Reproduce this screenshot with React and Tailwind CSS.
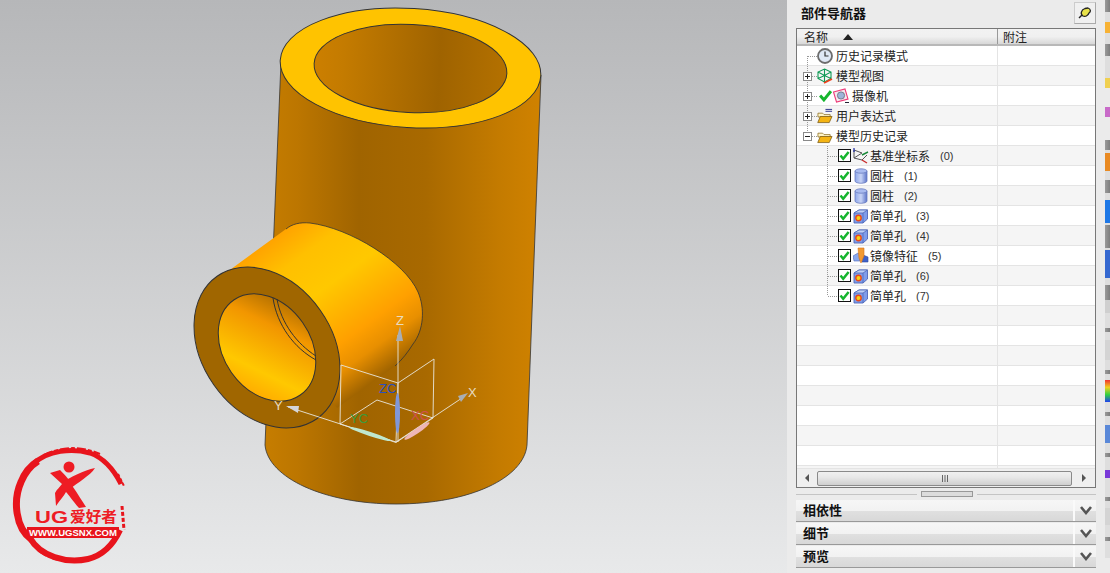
import React from "react";

const cjk = { fontFamily: '"Noto Sans CJK SC", "Liberation Sans", sans-serif' };

function Scene() {
  return (
    <svg width="787" height="573" viewBox="0 0 787 573" className="block">
      <defs>
        <linearGradient id="body" gradientUnits="userSpaceOnUse" x1="265" y1="0" x2="541" y2="0">
          <stop offset="0" stopColor="#c67d00" />
          <stop offset="0.12" stopColor="#bc7600" />
          <stop offset="0.34" stopColor="#a06400" />
          <stop offset="0.58" stopColor="#a86900" />
          <stop offset="0.85" stopColor="#c47b00" />
          <stop offset="1" stopColor="#d08200" />
        </linearGradient>
        <linearGradient id="well" gradientUnits="userSpaceOnUse" x1="314" y1="0" x2="507" y2="0">
          <stop offset="0" stopColor="#cc7f00" />
          <stop offset="0.15" stopColor="#c47b00" />
          <stop offset="0.65" stopColor="#9f6300" />
          <stop offset="1" stopColor="#b47100" />
        </linearGradient>
        <linearGradient id="pipe" gradientUnits="userSpaceOnUse" x1="238" y1="258" x2="344" y2="403">
          <stop offset="0" stopColor="#ff9f00" />
          <stop offset="0.2" stopColor="#ffc000" />
          <stop offset="0.42" stopColor="#ffc800" />
          <stop offset="0.72" stopColor="#ffa000" />
          <stop offset="0.85" stopColor="#e88f00" />
          <stop offset="0.95" stopColor="#b87200" />
          <stop offset="1" stopColor="#a06400" />
        </linearGradient>
        <linearGradient id="bore" gradientUnits="userSpaceOnUse" x1="235" y1="290" x2="295" y2="400">
          <stop offset="0" stopColor="#8f5a00" />
          <stop offset="0.35" stopColor="#f29600" />
          <stop offset="0.72" stopColor="#ffc800" />
          <stop offset="1" stopColor="#ff9f00" />
        </linearGradient>
      </defs>
      {/* main cylinder */}
      <path d="M281 62 L265 445 C268 478 325 504 396 504 C470 504 524 478 527 445 L541 75 Z" fill="url(#body)" stroke="#333" strokeWidth="0.8" />
      <ellipse cx="410.5" cy="68" rx="130.5" ry="59.5" transform="rotate(3.5 410.5 68)" fill="#ffc300" stroke="#333" strokeWidth="1" />
      <ellipse cx="410.5" cy="68.5" rx="96.5" ry="44" transform="rotate(3 410.5 68.5)" fill="url(#well)" stroke="#333" strokeWidth="1" />
      {/* side pipe */}
      <path d="M227 272 L286 229 C292 224 300 222 310 223 C350 228 405 262 418 292 C425 308 424 330 413 344 C408 352 402 360 395 366 L337 408 Z" fill="url(#pipe)" />
      <path d="M286 229 C292 224 300 222 310 223 C350 228 405 262 418 292 C425 308 424 330 413 344 C408 352 402 360 395 366" fill="none" stroke="#333" strokeWidth="0.8" />
      <ellipse cx="267" cy="347.5" rx="87" ry="65" transform="rotate(55 267 347.5)" fill="#a06600" stroke="#333" strokeWidth="1" />
      <ellipse cx="267" cy="347.5" rx="58" ry="43.5" transform="rotate(55 267 347.5)" fill="url(#bore)" stroke="#333" strokeWidth="1" />
      <path d="M273 298 C277 325 294 348 316 360" fill="none" stroke="#333" strokeWidth="1" />
      <path d="M277 299 C281 323 297 344 316 356" fill="none" stroke="#333" strokeWidth="1" />
      {/* datum */}
      <g stroke="#e9e6de" strokeWidth="0.9" fill="none">
        <path d="M340 424 L396 442.5 L433 418 L377 400 Z" />
        <path d="M341 365 L398 383 L434 359 M340 424 L341 365 M433 418 L434 359 M398 383 L396 442" />
        <path d="M398 442 L398 335" />
        <path d="M396 442 L288 407" />
        <path d="M396 442 L465 396" />
      </g>
      <polygon points="400,326 396,341 403,341" fill="#a9aeb4" />
      <polygon points="286,406 299,406 298,413" fill="#d4d6da" />
      <polygon points="468,393 458,396 461,402" fill="#a9aeb4" />
      <ellipse cx="397.5" cy="413" rx="2.5" ry="20" fill="#7f97d8" />
      <ellipse cx="370" cy="434" rx="22" ry="2" transform="rotate(18 370 434)" fill="#bfe8cf" />
      <ellipse cx="417" cy="431" rx="15" ry="2.5" transform="rotate(-34 417 431)" fill="#eeb6b6" />
      <g fontFamily="Liberation Sans, sans-serif" fontSize="13">
        <text x="396" y="325" fill="#e8dcc0">Z</text>
        <text x="274" y="410" fill="#e8dcc0">Y</text>
        <text x="468" y="397" fill="#e8dcc0">X</text>
        <text x="379" y="393" fill="#2a4fc0">ZC</text>
        <text x="350" y="423" fill="#3c9a3c">YC</text>
        <text x="411" y="420" fill="#d05050">XC</text>
      </g>
    </svg>
  );
}

function Logo() {
  return (
    <svg width="135" height="130" viewBox="0 0 135 130" className="absolute left-0 top-[440px]">
      <g fill="none" stroke="#e8141c">
        <path d="M32 100 C15 88 13 60 21 42 C25 32 30 26 38 21" strokeWidth="7" />
        <path d="M33 24 C48 10 72 8 90 13 C104 18 114 30 121 44" strokeWidth="5" />
        <path d="M44 15 C62 6 82 6 100 14" strokeWidth="2" strokeDasharray="9 2 4 2" />
        <path d="M30 98 C40 116 66 124 88 119 C104 115 114 103 120 90" strokeWidth="6" />
        <path d="M40 112 C58 124 84 125 102 114" strokeWidth="2" strokeDasharray="7 2 3 2" />
        <path d="M122 66 L124 90" strokeWidth="3" strokeDasharray="4 2" />
        <path d="M118 34 L124 46" strokeWidth="2" strokeDasharray="3 2" />
      </g>
      <circle cx="69" cy="27" r="5.5" fill="#ee1c24" />
      <path d="M50 33 L60 30 C66 36 70 40 73 47 C78 54 82 61 86 67 L79 68 C72 60 69 55 66 52 C64 56 60 60 56 66 L55 53 C57 49 60 47 62 44 C58 40 54 37 50 33 Z" fill="#ee1c24" />
      <path d="M62 42 C70 38 84 30 95 28 C90 36 78 42 69 50 Z" fill="#ee1c24" />
      <text x="35" y="83" fontFamily="Liberation Sans, sans-serif" fontSize="17" fontWeight="700" fill="#ee1c24" textLength="33" lengthAdjust="spacingAndGlyphs">UG</text>
      <text x="70" y="82" fontFamily='"Noto Sans CJK SC", sans-serif' fontSize="15" fontWeight="700" fill="#ee1c24" textLength="47" lengthAdjust="spacingAndGlyphs">爱好者</text>
      <rect x="27" y="87" width="92" height="11" fill="#e8141c" />
      <text x="29" y="96" fontFamily="Liberation Sans, sans-serif" fontSize="9.5" fontWeight="700" fill="#ffffff" textLength="88" lengthAdjust="spacingAndGlyphs">WWW.UGSNX.COM</text>
    </svg>
  );
}

function Gutter0({ box, first, last }) {
  return (
    <svg width="20" height="19" viewBox="0 0 20 19" className="shrink-0">
      <g stroke="#999" strokeDasharray="1 1" fill="none" shapeRendering="crispEdges">
        <path d={`M10.5 ${first ? 10 : 0} V${last ? 10 : 20}`} />
        <path d="M10.5 10.5 H20" />
      </g>
      {box && (
        <g shapeRendering="crispEdges">
          <rect x="6.5" y="6.5" width="8" height="8" fill="#fff" stroke="#8a8a8a" />
          <path d="M8 10.5 H13" stroke="#222" />
          {box === "+" && <path d="M10.5 8 V13" stroke="#222" />}
        </g>
      )}
    </svg>
  );
}

function Gutter1({ last }) {
  return (
    <svg width="41" height="19" viewBox="0 0 41 19" className="shrink-0">
      <g stroke="#999" strokeDasharray="1 1" fill="none" shapeRendering="crispEdges">
        <path d={`M30.5 0 V${last ? 10 : 20}`} />
        <path d="M30.5 10.5 H40" />
      </g>
    </svg>
  );
}

const Clock = () => (
  <svg width="16" height="16" viewBox="0 0 16 16" className="shrink-0">
    <circle cx="8" cy="8" r="7" fill="#dfe8f5" stroke="#6d6d6d" strokeWidth="1.8" />
    <path d="M8 3.5 V8 H11.5" fill="none" stroke="#333" strokeWidth="1.2" />
  </svg>
);
const GreenCube = () => (
  <svg width="16" height="16" viewBox="0 0 16 16" className="shrink-0">
    <path d="M7.5 1 L14 4 V10.5 L7.5 14 L1 10.5 V4 Z M1 4 L7.5 7.5 L14 4 M7.5 7.5 V14 M1 10.5 L7.5 7.5 L14 10.5 M7.5 1 V7.5" fill="none" stroke="#0f9a55" strokeWidth="1.1" />
    <path d="M7 15 L15 11" stroke="#f0401c" strokeWidth="1.8" />
  </svg>
);
const Tick = () => (
  <svg width="13" height="13" viewBox="0 0 12 12" className="shrink-0">
    <path d="M1 6 L4.5 10 L11 2" fill="none" stroke="#16b52e" strokeWidth="2.8" />
  </svg>
);
const Camera = () => (
  <svg width="16" height="16" viewBox="0 0 16 16" className="shrink-0">
    <path d="M0.5 4 L12 1 L15 11 L3.5 14 Z" fill="#f6e9ee" stroke="#ee3a78" strokeWidth="1.1" />
    <circle cx="8" cy="7.5" r="3.6" fill="#9db4d8" stroke="#667" strokeWidth="0.8" />
    <path d="M12 14.5 H16" stroke="#223" strokeWidth="1" />
  </svg>
);
const Folder = ({ bars }) => (
  <svg width="16" height="16" viewBox="0 0 17 16" className="shrink-0">
    {bars && <path d="M9 1 H16 M9 3 H16" stroke="#222a88" strokeWidth="1" />}
    <path d="M1 5 H6 L7.5 6.5 H14 V9 H1 Z" fill="#fff5c8" stroke="#8a6a1c" strokeWidth="0.8" />
    <path d="M3.5 8.5 H16 L13 15 H0.8 Z" fill="#f4b414" stroke="#7a5a14" strokeWidth="0.8" />
  </svg>
);
const Check = () => (
  <svg width="13" height="13" viewBox="0 0 13 13" className="shrink-0">
    <rect x="0.5" y="0.5" width="12" height="12" fill="#fff" stroke="#111" />
    <path d="M2.5 6.5 L5.2 9.8 L10.6 3" fill="none" stroke="#16b52e" strokeWidth="2.5" />
  </svg>
);
const Datum = () => (
  <svg width="16" height="16" viewBox="0 0 16 16" className="shrink-0">
    <path d="M1 2 V10 L9 12 L14 7 M1 10 L9 5 M1 2 L9 5" fill="none" stroke="#555" strokeWidth="1" />
    <path d="M1 4 V0" stroke="#1a2aa8" strokeWidth="1.2" />
    <path d="M9 7 L15 4" stroke="#1a8a3a" strokeWidth="1.4" />
    <path d="M9 12 L14 15" stroke="#c82a2a" strokeWidth="1.4" />
  </svg>
);
const Cyl = () => (
  <svg width="14" height="16" viewBox="0 0 14 16" className="shrink-0">
    <defs>
      <linearGradient id="cy" x1="0" x2="1" y1="0" y2="0">
        <stop offset="0" stopColor="#8da6ea" />
        <stop offset="0.5" stopColor="#c8d4f6" />
        <stop offset="1" stopColor="#5b74c8" />
      </linearGradient>
    </defs>
    <path d="M1 3 V13 C1 16 13 16 13 13 V3 Z" fill="url(#cy)" stroke="#6a7cc0" strokeWidth="0.8" />
    <ellipse cx="7" cy="3" rx="6" ry="2.2" fill="#a9bbf0" stroke="#6a7cc0" strokeWidth="0.8" />
  </svg>
);
const Hole = () => (
  <svg width="16" height="16" viewBox="0 0 16 16" className="shrink-0">
    <path d="M1 5 L6 2 H14.5 V11 L10 15 H1 Z" fill="#7f9cea" stroke="#4f68b8" strokeWidth="0.9" />
    <path d="M1 5 H10 L14.5 2 H6 Z" fill="#c0d0f6" stroke="#4f68b8" strokeWidth="0.8" />
    <path d="M10 5 V15" stroke="#4f68b8" strokeWidth="0.8" />
    <circle cx="5.5" cy="10" r="2.7" fill="#f6d414" stroke="#e8461c" strokeWidth="1.4" />
  </svg>
);
const Mirror = () => (
  <svg width="16" height="17" viewBox="0 0 16 17" className="shrink-0">
    <path d="M0 9 L5 6 L7 8 V14 L1 14 Z" fill="#8aa8ee" stroke="#4f68b8" strokeWidth="0.6" />
    <path d="M10 8 L15 10 V15 L9 15 Z" fill="#3f62c8" stroke="#2f4aa0" strokeWidth="0.6" />
    <path d="M5 1 H11 V9 L8 16 L6 11 Z" fill="#f29a32" stroke="#d87418" strokeWidth="0.6" />
  </svg>
);

const rows = [
  { depth: 0, first: true, icon: <Clock />, text: "历史记录模式" },
  { depth: 0, box: "+", icon: <GreenCube />, text: "模型视图" },
  { depth: 0, box: "+", icon: <span className="ml-[2px] flex items-center gap-[1px]"><Tick /><Camera /></span>, text: "摄像机" },
  { depth: 0, box: "+", icon: <Folder bars />, text: "用户表达式" },
  { depth: 0, box: "-", last: true, icon: <Folder />, text: "模型历史记录" },
  { depth: 1, icon: <Datum />, text: "基准坐标系", n: 0 },
  { depth: 1, icon: <Cyl />, text: "圆柱", n: 1 },
  { depth: 1, icon: <Cyl />, text: "圆柱", n: 2 },
  { depth: 1, icon: <Hole />, text: "简单孔", n: 3 },
  { depth: 1, icon: <Hole />, text: "简单孔", n: 4 },
  { depth: 1, icon: <Mirror />, text: "镜像特征", n: 5 },
  { depth: 1, icon: <Hole />, text: "简单孔", n: 6 },
  { depth: 1, last: true, icon: <Hole />, text: "简单孔", n: 7 },
];

function Row({ row, index }) {
  const bg = index % 2 ? "bg-[#f5f5f5]" : "bg-white";
  return (
    <div className={`flex h-5 shrink-0 border-b border-[#e4e4e4] ${bg}`}>
      <div className="flex w-[201px] shrink-0 items-center border-r border-[#e4e4e4]">
        {row && row.depth === 0 && (
          <>
            <Gutter0 box={row.box} first={row.first} last={row.last} />
            <span className="mr-[3px] flex">{row.icon}</span>
          </>
        )}
        {row && row.depth === 1 && (
          <>
            <Gutter1 last={row.last} />
            <span className="mr-[1px] flex"><Check /></span>
            <span className="flex w-[18px] justify-center">{row.icon}</span>
          </>
        )}
        {row && <span className="whitespace-nowrap text-[12px] leading-none text-[#222]">{row.text}</span>}
        {row && row.n !== undefined && (
          <span className="ml-[10px] whitespace-nowrap pt-[1px] text-[11px] leading-none text-[#333]" style={{ fontFamily: '"Liberation Sans", sans-serif' }}>
            ({row.n})
          </span>
        )}
      </div>
      <div className="flex-1" />
    </div>
  );
}

function Accordion({ label }) {
  return (
    <div className="flex h-[22px] shrink-0 border-b border-[#999] bg-[linear-gradient(#f6f6f6_0%,#f2f2f2_50%,#e0e0e0_52%,#d8d8d8_100%)]">
      <div className="flex-1 pl-[7px] text-[13px] font-bold leading-[20px] text-[#111]">{label}</div>
      <div className="flex w-[23px] items-center justify-center border-l-2 border-[#fafafa]">
        <svg width="12" height="9" viewBox="0 0 12 9">
          <path d="M1 1 L6 7 L11 1" fill="none" stroke="#555" strokeWidth="2.6" />
        </svg>
      </div>
    </div>
  );
}

const strip = [
  { band: 12, body: 32, top: 10, h: 11, fill: "bg-[#f7b234]" },
  { band: 12, body: 32, top: 22, h: 10, fill: "bg-[#f0d050]" },
  { band: 0, body: 52, top: 19, h: 10, fill: "bg-[#c86ac8]", free: true },
  { band: 10, body: 30, top: 3, h: 18, fill: "bg-[#e98a22]" },
  { band: 13, body: 32, top: 7, h: 23, fill: "bg-[#1e78e6]" },
  { band: 23, body: 37, top: 2, h: 28, fill: "bg-[#3468d0]" },
  { band: 15, body: 28, top: 0, h: 13, fill: "bg-[#cfcfcf]" },
  { band: 4, body: 38, top: 8, h: 20, fill: "bg-[#d4d4d4]" },
  { band: 4, body: 38, top: 6, h: 22, fill: "bg-[linear-gradient(#f03030,#f0d020,#30d040,#2040f0)]" },
  { band: 4, body: 37, top: 9, h: 18, fill: "bg-[#5a88d8]" },
  { band: 4, body: 40, top: 13, h: 8, fill: "bg-[#7a3ad8]" },
  { band: 4, body: 36, top: 7, h: 17, fill: "bg-[#d4d4d4]" },
  { band: 4, body: 17, top: 0, h: 0, fill: "bg-[#ececec]" },
];

export default function App() {
  return (
    <div className="flex h-[573px] w-[1110px] overflow-hidden bg-[#ebebeb]" style={cjk}>
      <div className="relative h-full w-[787px] shrink-0 bg-gradient-to-b from-[#b6b7b9] to-[#e8e9ea]">
        <Scene />
        <Logo />
      </div>

      <div className="flex h-full w-[318px] shrink-0 flex-col bg-[#ebebeb] px-[9px]">
        <div className="flex h-[28px] shrink-0 items-start justify-between">
          <span className="mt-[6px] pl-[5px] text-[13px] font-bold leading-none text-[#111]">部件导航器</span>
          <span className="mt-[2px] flex h-[22px] w-[22px] items-center justify-center border border-[#ccc] border-b-[#aaa] border-r-[#aaa] bg-[#f0f0f0]">
            <svg width="14" height="12" viewBox="0 0 14 12">
              <path d="M1 11 L4 8" stroke="#222" strokeWidth="1.4" />
              <path d="M5 9 C2 7 3 3 7 1.5 L10 1 C13 2 13 5 11 6 C10 9 7 10 5 9 Z" fill="#e8e24a" stroke="#222" strokeWidth="1.3" />
            </svg>
          </span>
        </div>

        <div className="flex h-[460px] shrink-0 flex-col overflow-hidden border border-[#777] bg-white">
          <div className="flex h-[17px] shrink-0 border-b-2 border-[#b8b8b8] bg-[linear-gradient(#f2f2f2,#f0f0f0_50%,#d8d8d8)]">
            <div className="flex w-[201px] shrink-0 items-center border-r border-[#999] pl-[7px] text-[12px] leading-none text-[#222]">
              <span>名称</span>
              <svg width="10" height="6" viewBox="0 0 10 6" className="ml-[15px]"><path d="M0 6 L5 0 L10 6 Z" fill="#222" /></svg>
            </div>
            <div className="pl-[5px] text-[12px] leading-[15px] text-[#222]">附注</div>
          </div>
          <div className="flex flex-1 flex-col overflow-hidden">
            {Array.from({ length: 22 }).map((_, i) => (
              <Row key={i} row={rows[i]} index={i} />
            ))}
          </div>
          <div className="flex h-[19px] shrink-0 items-center border-t border-[#e4e4e4] bg-[#efefef]">
            <div className="flex w-[20px] justify-center">
              <svg width="5" height="8" viewBox="0 0 5 8"><path d="M4 0 L0 4 L4 8 Z" fill="#555" /></svg>
            </div>
            <div className="flex h-[15px] flex-1 items-center justify-center rounded-[2px] border border-[#8a8a8a] bg-[linear-gradient(#f0f0f0,#e8e8e8_40%,#cfcfcf)]">
              <svg width="8" height="7" viewBox="0 0 8 7"><path d="M1.5 0 V7 M4 0 V7 M6.5 0 V7" stroke="#666" strokeWidth="1" /></svg>
            </div>
            <div className="flex w-[23px] justify-center">
              <svg width="5" height="8" viewBox="0 0 5 8"><path d="M1 0 L5 4 L1 8 Z" fill="#555" /></svg>
            </div>
          </div>
        </div>

        <div className="flex h-[12px] shrink-0 items-center gap-[4px]">
          <div className="h-px flex-1 bg-[#c4c4c4]" />
          <div className="h-[6px] w-[52px] border border-[#999] bg-[#dcdcdc]" />
          <div className="h-px w-[119px] bg-[#c4c4c4]" />
        </div>
        <div className="flex shrink-0 flex-col gap-[1px]">
          <Accordion label="相依性" />
          <Accordion label="细节" />
          <Accordion label="预览" />
        </div>
      </div>

      <div className="flex h-full w-[5px] shrink-0 flex-col">
        {strip.map((s, i) => (
          <div key={i} className="shrink-0">
            {s.band > 0 && <div className="bg-[linear-gradient(90deg,#9a9a9a,#7e7e7e)]" style={{ height: s.band }} />}
            <div className={s.free ? "overflow-hidden bg-[#ebebeb]" : "overflow-hidden bg-[#dedede]"} style={{ height: s.body, paddingTop: s.top }}>
              <div className={s.fill} style={{ height: s.h }} />
            </div>
          </div>
        ))}
      </div>
    </div>
  );
}
